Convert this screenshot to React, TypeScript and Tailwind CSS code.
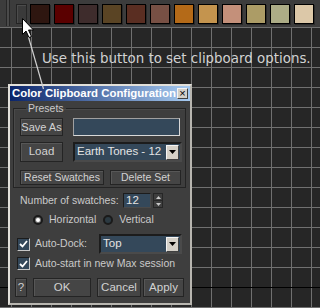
import clsx from 'clsx'

const swatches = [
  '#2e1610',
  '#5a0000',
  '#3e2c2c',
  '#5a4424',
  '#5a2e22',
  '#785044',
  '#b46a18',
  '#c4944e',
  '#c4907a',
  '#ac9c66',
  '#acac86',
  '#dcc8a8',
]

function Btn({ children, className }: { children: React.ReactNode; className?: string }) {
  return (
    <div
      className={clsx(
        'flex items-center justify-center whitespace-nowrap border border-[#242424] bg-[#454545] text-[#d2d2d2] shadow-[inset_1px_1px_0_#575757]',
        className,
      )}
    >
      {children}
    </div>
  )
}

function DropArrow() {
  return (
    <div className="flex h-[15px] w-[13px] items-center justify-center border border-[#f4f4f4] border-r-[#404040] border-b-[#404040] bg-[#d4d0c8]">
      <svg width="7" height="4" viewBox="0 0 7 4">
        <path d="M0 0h7L3.5 4z" fill="#000" />
      </svg>
    </div>
  )
}

function Dropdown({ value, className }: { value: string; className?: string }) {
  return (
    <div
      className={clsx(
        'flex h-[20px] items-center border-2 border-[#1c1c1c] border-r-[#4a4a4a] border-b-[#4a4a4a] bg-[#34485a] pl-[2px] pr-[1px]',
        className,
      )}
    >
      <span className="flex-1 whitespace-nowrap text-[11.5px] text-[#e4e4e4]">{value}</span>
      <DropArrow />
    </div>
  )
}

function Check() {
  return (
    <div className="flex h-[13px] w-[13px] items-center justify-center border border-[#1c1c1c] border-r-[#c8c8c8] border-b-[#c8c8c8] bg-[#34485a]">
      <svg width="9" height="8" viewBox="0 0 9 8">
        <path d="M1 4l2.5 2.5L8 1" stroke="#fff" strokeWidth="1.8" fill="none" />
      </svg>
    </div>
  )
}

function Radio({ on }: { on?: boolean }) {
  return (
    <div
      className={clsx(
        'flex h-[10px] w-[10px] items-center justify-center rounded-full border-2 border-[#1a1a1a]',
        on ? 'bg-[#7a7a7a]' : 'bg-[#2c3a42]',
      )}
    >
      {on && <div className="h-[4px] w-[4px] rounded-full bg-white" />}
    </div>
  )
}

function Toolbar() {
  return (
    <div className="flex h-[27px] items-start bg-[#3c3c3c]">
      <div className="h-[26px] w-[7px] border-r border-[#262626]" />
      <div className="h-[26px] w-[3px] border-r border-[#262626] bg-[#4a4a4a]" />
      <div className="ml-[6px] mt-[4px] h-[20px] w-[11px] border border-[#242424] bg-[#3a3a3a] shadow-[inset_1px_1px_0_#4c4c4c]" />
      <div className="ml-[3px] mt-[4px] flex gap-[4px]">
        {swatches.map((c) => (
          <div
            key={c}
            className="h-[20px] w-[20px] border border-black shadow-[1px_1px_0_#2a2a2a]"
            style={{ backgroundColor: c }}
          />
        ))}
      </div>
    </div>
  )
}

function Dialog() {
  return (
    <div className="absolute left-[8px] top-[57px] flex h-[221px] w-[184px] flex-col border-2 border-[#e2e0da] border-r-[#b8b6b0] border-b-[#b8b6b0] font-['Liberation_Sans',Arial,sans-serif] text-[10.5px] text-[#cacaca]">
      <div className="flex h-[15px] items-center bg-[linear-gradient(to_right,#0a246a,#a6caf0)] pl-[2px] pr-[2px]">
        <span className="flex-1 whitespace-nowrap text-[11.4px] font-bold leading-none text-white">
          Color Clipboard Configuration
        </span>
        <div className="flex h-[11px] w-[11px] items-center justify-center border border-[#f4f4f4] border-r-[#404040] border-b-[#404040] bg-[#d4d0c8] text-[11px] leading-none text-black">
          ×
        </div>
      </div>

      <div className="flex flex-1 flex-col bg-[#3e3e3e]">
        <fieldset className="ml-[3px] mt-[1px] w-[173px] border border-[#242424] pb-[2px] pl-[6px] shadow-[inset_1px_1px_0_#4a4a4a]">
          <legend className="ml-[6px] px-[2px] leading-[12px]">Presets</legend>
          <div className="mt-[4px] flex flex-col">
            <div className="flex h-[18px] gap-[10px]">
              <Btn className="w-[43px] text-[11px]">Save As</Btn>
              <div className="w-[107px] border border-[#d8d8d8] border-t-[#a0a0a0] border-l-[#a0a0a0] bg-[#34485a]" />
            </div>
            <div className="mt-[6px] flex h-[20px] gap-[10px]">
              <Btn className="w-[43px] text-[11.5px]">Load</Btn>
              <Dropdown value="Earth Tones - 12" className="w-[109px]" />
            </div>
            <div className="mt-[8px] flex h-[15px] gap-[6px]">
              <Btn className="w-[84px]">Reset Swatches</Btn>
              <Btn className="w-[71px]">Delete Set</Btn>
            </div>
          </div>
        </fieldset>

        <div className="ml-[10px] mt-[5px] flex h-[15px] items-center">
          <span className="w-[103px]">Number of swatches:</span>
          <div className="flex h-[15px] w-[28px] items-center border border-[#1c1c1c] border-r-[#4a4a4a] border-b-[#4a4a4a] bg-[#34485a] pl-[2px] text-[11.5px] text-[#e4e4e4]">
            12
          </div>
          <div className="ml-[2px] flex h-[15px] w-[10px] flex-col border border-[#262626]">
            <div className="flex flex-1 items-center justify-center border-b border-[#262626]">
              <svg width="5" height="3" viewBox="0 0 5 3">
                <path d="M0 3h5L2.5 0z" fill="#c8c8c8" />
              </svg>
            </div>
            <div className="flex flex-1 items-center justify-center">
              <svg width="5" height="3" viewBox="0 0 5 3">
                <path d="M0 0h5L2.5 3z" fill="#c8c8c8" />
              </svg>
            </div>
          </div>
        </div>

        <div className="ml-[23px] mt-[6px] flex h-[12px] items-center">
          <Radio on />
          <span className="ml-[6px]">Horizontal</span>
          <div className="ml-[7px]">
            <Radio />
          </div>
          <span className="ml-[6px]">Vertical</span>
        </div>

        <div className="ml-[7px] mt-[8px] flex h-[20px] items-center">
          <Check />
          <span className="ml-[5px] w-[64px]">Auto-Dock:</span>
          <Dropdown value="Top" className="w-[83px]" />
        </div>

        <div className="ml-[7px] mt-[3px] flex h-[13px] items-center">
          <Check />
          <span className="ml-[5px]">Auto-start in new Max session</span>
        </div>

        <div className="ml-[5px] mt-[8px] flex h-[19px] text-[11.5px]">
          <Btn className="w-[12px]">?</Btn>
          <Btn className="ml-[6px] w-[58px]">OK</Btn>
          <Btn className="ml-[6px] w-[44px]">Cancel</Btn>
          <Btn className="ml-[2px] w-[41px]">Apply</Btn>
        </div>
      </div>
    </div>
  )
}

export default function App() {
  return (
    <div className="relative h-[308px] w-[320px] overflow-hidden bg-[#262626]">
      <Toolbar />
      <div className="relative h-[281px] bg-[#262626] bg-[linear-gradient(to_right,#707070_1px,transparent_1px),linear-gradient(to_bottom,#707070_1px,transparent_1px)] bg-size-[20px_20px] bg-position-[11px_0px]">
        <div className="absolute left-0 right-0 top-[260px] h-px bg-black" />
        <div className="absolute left-[42px] top-[22px] whitespace-nowrap font-['DejaVu_Sans',sans-serif] text-[13.4px] text-[#d2d2d2]">
          Use this button to set clipboard options.
        </div>
        <Dialog />
      </div>
      <svg className="pointer-events-none absolute inset-0" width="320" height="308">
        <line x1="28.5" y1="37" x2="43.5" y2="89" stroke="#d0d0d0" strokeWidth="1.2" />
        <path
          d="M22.5 18.5v16l3.5-3.5 3 6.5 2.5-1-3-6.5h5z"
          fill="#fff"
          stroke="#000"
          strokeWidth="1"
        />
      </svg>
    </div>
  )
}
